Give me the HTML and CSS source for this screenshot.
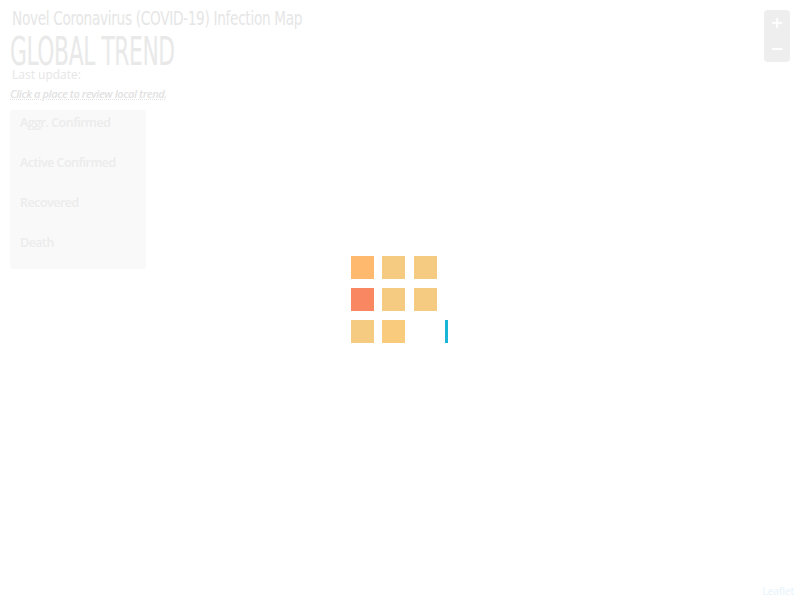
FILE: index.html
```html
<!DOCTYPE html>
<html>
<head>
<meta charset="utf-8">
<title>COVID-19 Infection Map</title>
<link rel="stylesheet" href="styles.css">
</head>
<body>
<div class="map">
  <div class="info">
    <h1 class="title">Novel Coronavirus (COVID-19) Infection Map</h1>
    <h2 class="trend">GLOBAL TREND</h2>
    <div class="update">Last update:</div>
    <div class="hint">Click a place to review local trend.</div>
    <ul class="legend">
      <li>Aggr. Confirmed</li>
      <li>Active Confirmed</li>
      <li>Recovered</li>
      <li>Death</li>
    </ul>
  </div>
  <div class="zoom">
    <span class="zbtn">+</span>
    <span class="zbtn">&minus;</span>
  </div>
  <div class="loader">
    <span class="sq c1"></span>
    <span class="sq c2"></span>
    <span class="sq c2"></span>
    <span class="sq c3"></span>
    <span class="sq c2"></span>
    <span class="sq c2"></span>
    <span class="sq c2"></span>
    <span class="sq c4"></span>
    <span class="sq bar"></span>
  </div>
  <div class="attrib">Leaflet</div>
</div>
</body>
</html>
```

FILE: styles.css
```css
html, body {
  margin: 0;
  padding: 0;
  background: #fff;
}
.map {
  position: relative;
  width: 800px;
  height: 600px;
  overflow: hidden;
  font-family: "Open Sans", "DejaVu Sans", sans-serif;
}
.info {
  display: flex;
  flex-direction: column;
  align-items: flex-start;
  padding: 5px 0 0 10px;
}
.title {
  margin: 0 0 0 2px;
  font-family: "DejaVu Sans", sans-serif;
  font-stretch: condensed;
  font-weight: normal;
  font-size: 19px;
  letter-spacing: -0.4px;
  line-height: 26px;
  white-space: nowrap;
  color: #e6e6e6;
  transform: scaleX(0.8);
  transform-origin: left center;
}
.trend {
  margin: 5px 0 0 0;
  font-family: "DejaVu Sans", sans-serif;
  font-stretch: condensed;
  font-weight: normal;
  font-size: 39px;
  letter-spacing: -0.6px;
  line-height: 32px;
  white-space: nowrap;
  color: #e9e9e9;
  transform: scaleX(0.62);
  transform-origin: left center;
}
.update {
  margin-left: 2px;
  font-size: 12px;
  line-height: 13px;
  color: #e6e6e6;
}
.hint {
  margin-top: 6px;
  font-size: 11px;
  line-height: 13px;
  font-style: italic;
  font-weight: 600;
  letter-spacing: -0.4px;
  color: #e2e2e2;
  text-decoration: underline dotted #e2e2e2;
}
.legend {
  list-style: none;
  margin: 10px 0 0 0;
  padding: 4px 10px 8px 10px;
  width: 116px;
  background: #f9f9f9;
  border-radius: 3px;
}
.legend li {
  font-size: 12.5px;
  font-weight: 600;
  line-height: 18px;
  height: 40px;
  letter-spacing: -0.5px;
  color: #ececec;
}
.legend li:last-child {
  height: 27px;
}
.zoom {
  position: absolute;
  top: 10px;
  right: 10px;
  width: 26px;
  display: flex;
  flex-direction: column;
  background: #eee;
  border-radius: 4px;
}
.zbtn {
  height: 26px;
  line-height: 26px;
  text-align: center;
  font-family: "DejaVu Sans", sans-serif;
  font-weight: bold;
  font-size: 16px;
  color: #fff;
}
.loader {
  position: absolute;
  left: 351px;
  top: 256px;
  display: grid;
  grid-template-columns: 23px 24px 23px;
  grid-auto-rows: 23px;
  column-gap: 8px;
  row-gap: 9px;
}
.sq { display: block; width: 23px; height: 23px; }
.c1 { background: #ffb96e; }
.c2 { background: #f5cb82; }
.c3 { background: #f88762; }
.c4 { background: #f8cc7c; }
.bar {
  width: 3px;
  margin-left: 31px;
  background: #1ab4d8;
}
.attrib {
  position: absolute;
  right: 6px;
  bottom: 3px;
  font-size: 10px;
  line-height: 12px;
  color: #e6f2fb;
}
```
